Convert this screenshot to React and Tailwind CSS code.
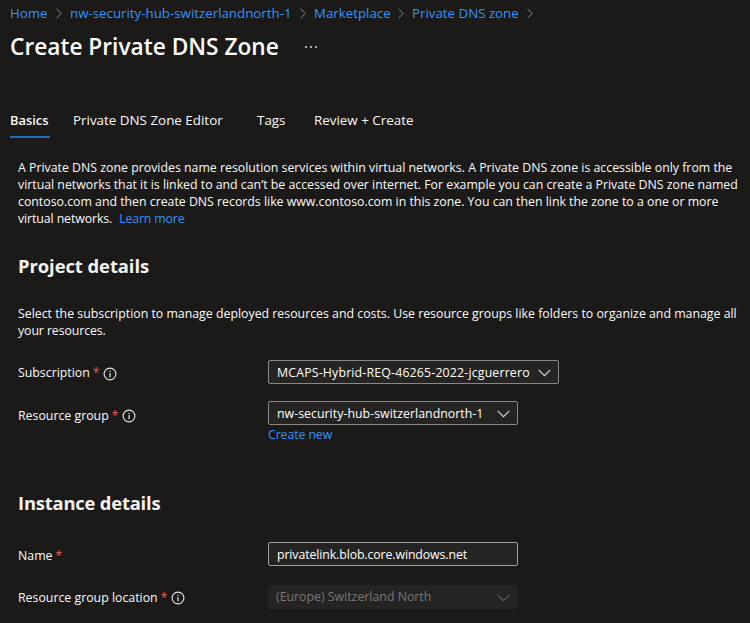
function Crumb({ children, width }) {
  return (
    <li className="flex items-center">
      <a className={`${width} whitespace-nowrap text-[#3094ff]`}>{children}</a>
      <svg className="mr-[8px] ml-[9px] h-[11px] w-[6px] shrink-0" viewBox="0 0 6 11" fill="none" stroke="#8a8886">
        <path d="M0.5 0.7 5.2 5.5 0.5 10.3" />
      </svg>
    </li>
  );
}

function Info({ className }) {
  return (
    <svg className={`${className} h-[14px] w-[14px] shrink-0`} viewBox="0 0 14 14" fill="none" stroke="#e8e6e4">
      <circle cx="7" cy="7" r="5.9" strokeWidth="1.1" />
      <path d="M7 6v4.2M7 3.7v1.2" strokeWidth="1.2" />
    </svg>
  );
}

function Chevron({ tone = "text-[#e0dedc]" }) {
  return (
    <svg className={`${tone} mt-[2px] h-[8px] w-[13px] shrink-0`} viewBox="0 0 13 8" fill="none" stroke="currentColor" strokeWidth="1.1">
      <path d="M0.7 0.8 6.5 6.7 12.3 0.8" />
    </svg>
  );
}

function Label({ children, info }) {
  return (
    <div className="flex h-[17px] w-[250px] shrink-0 items-center">
      <span className="whitespace-nowrap">{children}</span>
      <span className="mr-[5px] ml-[3px] w-[5px] text-[12px] text-[#f1605f]">*</span>
      {info && <Info className={info} />}
    </div>
  );
}

const heading = "h-[26px] text-[18.4px] leading-[26px] font-bold text-[#f5f3f1]";

export default function App() {
  return (
    <main className="h-[623px] w-[750px] overflow-hidden bg-[#1b1a19] font-['Open_Sans',sans-serif] text-[12.33px] leading-[17px] text-[#faf9f8]">
      <nav className="pt-[4px] pl-[10px]">
        <ol className="flex h-[18px] text-[13.3px] leading-[18px]">
          <Crumb width="w-[37px]">Home</Crumb>
          <Crumb width="w-[221px]">nw-security-hub-switzerlandnorth-1</Crumb>
          <Crumb width="w-[75px]">Marketplace</Crumb>
          <Crumb width="w-[106px]">Private DNS zone</Crumb>
        </ol>
      </nav>

      <header className="mt-[10px] flex h-[30px] items-center pl-[10px]">
        <h1 className="w-[295px] text-[22.7px] leading-[30px] font-semibold text-white">Create Private DNS Zone</h1>
        <div className="flex gap-[3px]">
          <i className="h-[2px] w-[2px] bg-[#aaa8a6]" />
          <i className="h-[2px] w-[2px] bg-[#aaa8a6]" />
          <i className="h-[2px] w-[2px] bg-[#aaa8a6]" />
        </div>
      </header>

      <div className="mt-[48px] flex h-[28px] pl-[10px] text-[13.4px] leading-[20px] whitespace-nowrap">
        <span className="mr-[23px] w-[40px] border-b-2 border-[#1b6ec2] text-[12.9px] font-semibold">Basics</span>
        <span className="w-[184px]">Private DNS Zone Editor</span>
        <span className="w-[57px]">Tags</span>
        <span>Review + Create</span>
      </div>

      <div className="pl-[18px]">
        <p className="mt-[21px] whitespace-nowrap">
          A Private DNS zone provides name resolution services within virtual networks. A Private DNS zone is accessible only from the<br />
          <span className="tracking-[-0.01px]">virtual networks that it is linked to and can’t be accessed over internet. For example you can create a Private DNS zone named</span><br />
          <span className="tracking-[-0.01px]">contoso.com and then create DNS records like www.contoso.com in this zone. You can then link the zone to a one or more</span><br />
          <span className="tracking-[-0.1px]">virtual networks.</span>
          <a className="ml-[7px] tracking-[-0.15px] text-[#3094ff]">Learn more</a>
        </p>

        <h2 className={`${heading} mt-[26px] tracking-[-0.06px]`}>Project details</h2>
        <p className="mt-[26px] whitespace-nowrap">
          Select the subscription to manage deployed resources and costs. Use resource groups like folders to organize and manage all<br />
          <span className="tracking-[-0.1px]">your resources.</span>
        </p>

        <div className="mt-[21px] flex h-[24px] items-center">
          <Label info="mt-[3px]">Subscription</Label>
          <div className="flex h-[24px] w-[291px] items-center justify-between rounded-[2px] border border-[#8a8886] bg-[#252423] pr-[7px] pl-[8px] text-white">
            <span className="tracking-[0.17px]">MCAPS-Hybrid-REQ-46265-2022-jcguerrero</span>
            <Chevron />
          </div>
        </div>

        <div className="mt-[17px] flex">
          <div className="pt-[6px]"><Label info="mt-px">Resource group</Label></div>
          <div>
            <div className="flex h-[24px] w-[250px] items-center justify-between rounded-[2px] border border-[#8a8886] bg-[#252423] pr-[7px] pl-[8px] text-white">
              <span className="tracking-[0.03px]">nw-security-hub-switzerlandnorth-1</span>
              <Chevron />
            </div>
            <a className="mt-px block tracking-[-0.1px] text-[#3094ff]">Create new</a>
          </div>
        </div>

        <h2 className={`${heading} mt-[47px] tracking-[-0.2px]`}>Instance details</h2>

        <div className="mt-[26px] flex h-[24px] items-center">
          <div className="pt-[2px]"><Label>Name</Label></div>
          <div className="flex h-[24px] w-[250px] items-center rounded-[2px] border border-[#a19f9d] bg-[#252423] pt-px pl-[8px] text-white">
            <span className="tracking-[-0.11px]">privatelink.blob.core.windows.net</span>
          </div>
        </div>

        <div className="mt-[19px] flex h-[24px] items-center">
          <Label info="mt-[2px]">Resource group location</Label>
          <div className="flex h-[24px] w-[250px] items-center justify-between rounded-[2px] bg-[#252423] pr-[8px] pb-px pl-[8px] text-[#797775]">
            <span>(Europe) Switzerland North</span>
            <Chevron tone="text-[#605e5c]" />
          </div>
        </div>
      </div>
    </main>
  );
}
